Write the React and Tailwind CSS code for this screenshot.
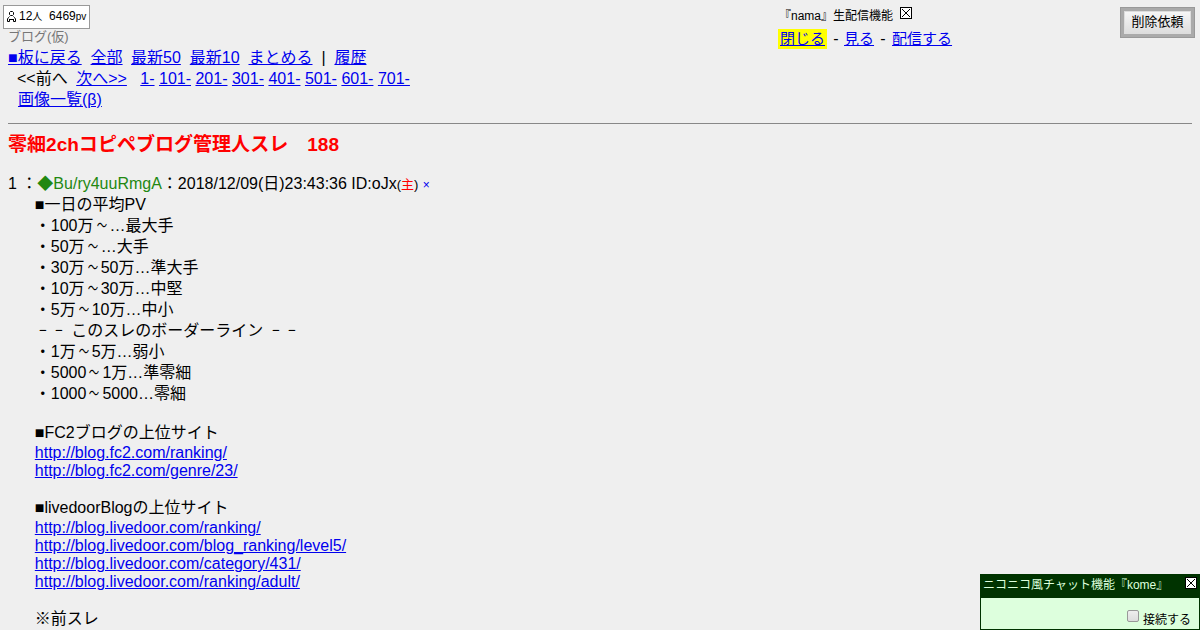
import React from 'react';

const pageLinks = ['1-', '101-', '201-', '301-', '401-', '501-', '601-', '701-'];

const postLines = [
  { text: '■一日の平均PV' },
  { text: '・100万～…最大手' },
  { text: '・50万～…大手' },
  { text: '・30万～50万…準大手' },
  { text: '・10万～30万…中堅' },
  { text: '・5万～10万…中小' },
  { text: '－－ このスレのボーダーライン －－' },
  { text: '・1万～5万…弱小' },
  { text: '・5000～1万…準零細' },
  { text: '・1000～5000…零細' },
  {},
  { text: '■FC2ブログの上位サイト' },
  { href: 'http://blog.fc2.com/ranking/' },
  { href: 'http://blog.fc2.com/genre/23/' },
  {},
  { text: '■livedoorBlogの上位サイト' },
  { href: 'http://blog.livedoor.com/ranking/' },
  { href: 'http://blog.livedoor.com/blog_ranking/level5/' },
  { href: 'http://blog.livedoor.com/category/431/' },
  { href: 'http://blog.livedoor.com/ranking/adult/' },
  {},
  { text: '※前スレ' },
];

// full-width dashes and waves keep their cell but are drawn narrower
const narrow = { '～': 'inline-block scale-x-[0.65]', '－': 'inline-block scale-x-[0.55]' };

function PostText({ text }) {
  return text.split(/([～－])/).map((part, i) => (narrow[part] ? <span key={i} className={narrow[part]}>{part}</span> : part));
}

function Link({ href = '#', className = '', children }) {
  return <a href={href} className={`text-[#0000ee] underline ${className}`}>{children}</a>;
}

function CloseIcon({ className = '' }) {
  return (
    <svg className={className} viewBox="0 0 12 12">
      <rect x="0.5" y="0.5" width="11" height="11" fill="#fff" stroke="#000" />
      <path d="M2 2l8 8M10 2l-8 8" stroke="#000" fill="none" />
    </svg>
  );
}

function PersonIcon() {
  return (
    <svg className="mr-[3px] h-[11px] w-[9px] shrink-0" viewBox="0 0 9 11" fill="none" stroke="#000">
      <path d="M3.5 0.5h2l1 1v2l-1 1h-2l-1-1v-2zM2.5 5.5l-1 1-1 1.500v2.500h2V8M6.500 5.500l1 1 1 1.500v2.500h-2V8M2.500 8.500h4" />
    </svg>
  );
}

function Counter() {
  return (
    <div className="absolute left-[3px] top-[5px] flex h-6 w-[87px] items-center whitespace-pre border border-[#999] bg-white pl-[3px] pb-[2px] text-[12px]">
      <PersonIcon />
      <span>12<span className="text-[10px]">人</span>{'  '}6469<span className="text-[10px]">pv</span></span>
    </div>
  );
}

function StreamPanel() {
  return (
    <div className="mt-[5px] w-[413px] shrink-0">
      <div className="flex h-5 items-center text-[12px]">
        <span className="w-[113px] whitespace-nowrap pt-px">『nama』生配信機能</span>
        <CloseIcon className="mb-1 ml-2 h-3 w-3" />
      </div>
      <div className="-ml-px mt-[4px] flex h-5 items-center whitespace-pre text-[15px]">
        <span className="mr-px flex h-5 items-center bg-[#ff0] px-[2px]"><Link>閉じる</Link></span>
        <span className="w-4 text-center text-[16px]">-</span>
        <Link>見る</Link>
        <span className="w-[18px] text-center text-[16px]">-</span>
        <Link>配信する</Link>
      </div>
    </div>
  );
}

function ChatPanel() {
  return (
    <div className="absolute bottom-0 right-0 h-14 w-[220px] border border-[#003300] bg-[#ddffdd] text-[12px]">
      <div className="flex h-[23px] items-start justify-between bg-[#003300] pl-[2px] pr-[2px] text-[#ddffdd]">
        <span className="whitespace-nowrap leading-5">ニコニコ風チャット機能『kome』</span>
        <CloseIcon className="mt-[2px] h-3 w-3" />
      </div>
      <label className="flex h-8 items-center justify-end pr-2 pt-[11px]">
        <span className="mb-[7px] mr-1 h-3 w-3 rounded-[2px] border border-[#999] bg-linear-to-b from-[#eee] to-[#ddd]" />
        接続する
      </label>
    </div>
  );
}

export default function App() {
  return (
    <div className="relative h-[630px] overflow-hidden bg-[#efefef] px-2 font-['Liberation_Sans','Noto_Sans_CJK_JP',sans-serif] text-[16px] text-black" lang="ja">
      <header className="flex h-[123px] justify-between">
        <div className="whitespace-pre pt-[26px]">
          <div className="h-[21px] text-[13px] leading-[21px] text-[#777]">ブログ(仮)</div>
          <div className="flex h-[21px] leading-[21px]">
            <Link className="mr-[8.9px]">■板に戻る</Link>
            <Link className="mr-[8.5px]">全部</Link>
            <Link className="mr-[8.9px]">最新50</Link>
            <Link className="mr-[8.9px]">最新10</Link>
            <Link className="mr-[8.9px]">まとめる</Link>
            <span className="mr-[8.9px]">|</span>
            <Link>履歴</Link>
          </div>
          <div className="flex h-[21px] pl-[9px] leading-[21px]">
            <span className="mr-[8.5px]">&lt;&lt;前へ</span>
            <Link className="mr-[13.4px]">次へ&gt;&gt;</Link>
            <span>{pageLinks.map((p) => <React.Fragment key={p}><Link>{p}</Link> </React.Fragment>)}</span>
          </div>
          <div className="h-[21px] pl-[10px] leading-[21px]"><Link>画像一覧(β)</Link></div>
        </div>
        <StreamPanel />
      </header>
      <hr className="border-t border-[#888]" />
      <h1 className="mt-[7px] h-[27px] text-[19.05px] font-bold leading-[27px] text-[#ff0000]">零細2chコピペブログ管理人スレ　188</h1>
      <article className="mt-[15px]">
        <div className="h-[21px] whitespace-pre leading-[21px]">
          1 ：<span className="text-[#228811]">◆Bu/ry4uuRmgA</span>：2018/12/09(日)23:43:36 ID:oJx<span className="text-[13px]">(<span className="text-[#ff0000]">主</span>)</span> <span className="text-[12px] text-[#0000ee]">×</span>
        </div>
        <div className="whitespace-pre pl-[26.8px]">
          {postLines.map((line, i) => {
            if (line.href) return <div key={i} className="h-[18px] leading-[20px]"><Link href={line.href}>{line.href}</Link></div>;
            if (!line.text) return <div key={i} className="h-[18px]" />;
            return <div key={i} className="h-[21px] leading-[21px]"><PostText text={line.text} /></div>;
          })}
        </div>
      </article>
      <Counter />
      <div className="absolute right-[5px] top-[7px] h-[31px] w-[75px] border border-[#999] bg-[#aaa] p-[3px]">
        <button className="flex h-[23px] w-[67px] items-center justify-center whitespace-nowrap border border-[#ddd] bg-linear-to-b from-[#f6f6f6] to-[#ddd] pb-px text-[13px]">削除依頼</button>
      </div>
      <ChatPanel />
    </div>
  );
}
